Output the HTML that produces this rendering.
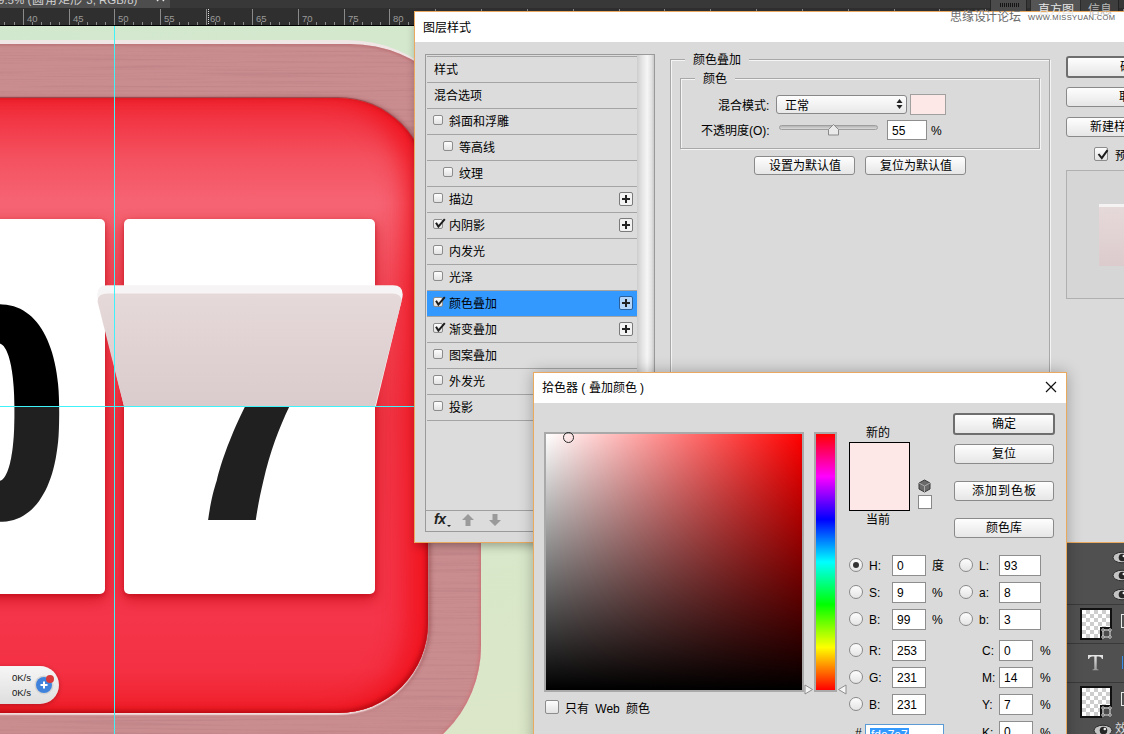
<!DOCTYPE html>
<html lang="zh-CN">
<head>
<meta charset="utf-8">
<style>
*{margin:0;padding:0;box-sizing:border-box;}
html,body{width:1124px;height:734px;overflow:hidden;background:#2e2e2e;font-family:"Liberation Sans",sans-serif;position:relative;}
.a{position:absolute;}
.t12{font-weight:500;font-size:12px;color:#000;white-space:nowrap;line-height:16px;}
/* top */
#topbar{left:0;top:0;width:1124px;height:11px;background:transparent;z-index:1;}
#topbar::before{content:"";position:absolute;left:0;top:0;width:1124px;height:8px;background:#383838;}
#tab{left:0;top:0;width:170px;height:8px;background:#4d4d4d;overflow:hidden;color:#d0d0d0;font-size:12px;white-space:nowrap;}
#ruler{left:0;top:8px;width:1124px;height:18px;background:#2f2f2f;border-bottom:1px solid #000;overflow:hidden;}
.tk{position:absolute;width:1px;background:#8a8a8a;}
.rn{position:absolute;top:5px;font-size:9.5px;line-height:11px;color:#9a9a9a;}
#canvas{left:0;top:26px;width:1124px;height:708px;background:#d3e6c9;overflow:hidden;}
/* dialog 1 */
#dlg{left:414px;top:11px;width:720px;height:532px;background:#dadada;border:1px solid #e9a95e;border-right:none;box-shadow:0 5px 9px -2px rgba(0,0,0,0.3);}
#dlgtitle{left:415px;top:12px;width:709px;height:30px;background:#fff;}
.row{left:427px;width:210px;height:26px;border-top:1px solid #a4a4a4;}
.row.sel{background:#3399ff;}
.rt{position:absolute;top:6px;font-weight:500;font-size:12px;line-height:14px;white-space:nowrap;color:#000;}
.cb{position:absolute;top:6px;width:10px;height:10px;border:1px solid #8c8c8c;border-radius:2px;background:linear-gradient(#fdfdfd,#e2e2e2);}
.ck{position:absolute;left:-1px;top:-1px;overflow:visible;}
.plus{position:absolute;left:192px;top:5px;width:14px;height:14px;border:1px solid #7a7a7a;border-radius:2px;background:#f2f2f2;}
.sel .plus{background:#b4d6fb;border-color:#2a5f9a;}
.plus::before{content:"";position:absolute;left:2px;top:5px;width:8px;height:2px;background:#222;}
.plus::after{content:"";position:absolute;left:5px;top:2px;width:2px;height:8px;background:#222;}
.btn{position:absolute;font-weight:500;border:1px solid #8a8a8a;border-radius:3px;background:linear-gradient(#fefefe,#e6e6e6);font-size:12px;line-height:18px;text-align:center;white-space:nowrap;color:#000;}
.grp{position:absolute;border:1px solid #a8a8a8;box-shadow:1px 1px 0 #f4f4f4, inset 1px 1px 0 #f4f4f4;}
.inp{position:absolute;background:#fff;border:1px solid #8e8e8e;font-size:12px;line-height:20px;padding-left:4px;color:#000;}
.rad{position:absolute;width:14px;height:14px;border:1px solid #8a8a8a;border-radius:50%;background:linear-gradient(#fdfdfd,#e4e4e4);}
.rad.on::after{content:"";position:absolute;left:3px;top:3px;width:6px;height:6px;border-radius:50%;background:#333;}
</style>
</head>
<body>
<div id="canvas" class="a" style="left:0;top:0;width:1124px;height:734px;overflow:hidden;background:linear-gradient(160deg,#d2e8ce 0%,#d6e8cb 50%,#dfe6c6 100%);">
  <!-- frame -->
  <div class="a" style="left:-300px;top:40px;width:781px;height:727px;border-radius:0 135px 121px 0;background:#f1e6e6;"></div>
  <div class="a" style="left:-300px;top:44px;width:781px;height:723px;border-radius:0 131px 121px 0;background:#ca8d8f;box-shadow:inset -2px 0 3px rgba(215,95,100,0.4), inset 0 2px 2px rgba(150,80,85,0.25);overflow:hidden;">
    <svg class="a" style="left:0;top:0" width="781" height="737"><defs><filter id="brush" x="0" y="0" width="100%" height="100%"><feTurbulence type="fractalNoise" baseFrequency="0.006 0.45" numOctaves="3" seed="7" result="n"/><feColorMatrix in="n" type="matrix" values="0 0 0 0 0.45  0 0 0 0 0.2  0 0 0 0 0.22  1.6 0 0 0 -0.75"/></filter></defs><rect width="781" height="737" filter="url(#brush)" opacity="0.8"/></svg>
  </div>
  <!-- red -->
  <div class="a" style="left:-300px;top:98px;width:728px;height:615px;border-radius:0 90px 90px 0;background:linear-gradient(180deg,#f02631 0px,#f23847 25px,#f4515f 60px,#f66474 105px,#f55f6e 125px,#f14454 200px,#ef3545 320px,#f5354a 520px,#f43144 570px,#f01f2a 616px);box-shadow:0 -1px 1px rgba(140,40,45,0.7), 0 1.5px 1.5px rgba(255,238,238,0.85), 3px 0 4px rgba(110,30,35,0.35), inset -2px -2px 4px rgba(130,0,10,0.5), inset -34px 0 26px -12px rgba(240,18,28,0.9), inset 0 5px 6px -4px rgba(200,20,30,0.4), inset 0 -8px 10px -4px rgba(220,15,20,0.6);"></div>
  <!-- cards -->
  <div class="a" style="left:-146px;top:219px;width:251px;height:375px;border-radius:5px;background:#fff;box-shadow:0 2px 4px rgba(175,0,10,0.45), 0 6px 14px rgba(185,0,12,0.55);"></div>
  <div class="a" style="left:124px;top:219px;width:251px;height:375px;border-radius:5px;background:#fff;box-shadow:0 2px 4px rgba(175,0,10,0.45), 0 6px 14px rgba(185,0,12,0.55);"></div>
  <svg class="a" style="left:0;top:0" width="1124" height="734">
    <defs>
      <clipPath id="up"><rect x="0" y="0" width="1124" height="406"/></clipPath>
      <clipPath id="dn"><rect x="0" y="406" width="1124" height="328"/></clipPath>
      <linearGradient id="flapg" x1="0" y1="0" x2="0" y2="1"><stop offset="0" stop-color="#e6d9da"/><stop offset="1" stop-color="#dacbcc"/></linearGradient>
    </defs>
    <path d="M59.2,413.1 L59.1,421.9 L58.9,429.0 L58.6,435.5 L58.1,441.7 L57.4,447.5 L56.6,453.1 L55.7,458.5 L54.6,463.7 L53.4,468.7 L52.1,473.4 L50.6,478.0 L49.0,482.3 L47.3,486.5 L45.4,490.4 L43.4,494.1 L41.3,497.6 L39.1,500.9 L36.8,503.9 L34.3,506.8 L31.7,509.4 L29.0,511.7 L26.2,513.8 L23.3,515.7 L20.2,517.4 L17.0,518.7 L13.7,519.9 L10.2,520.8 L6.5,521.4 L2.5,521.8 L-2.5,521.9 L-7.5,521.8 L-11.5,521.4 L-15.2,520.8 L-18.7,519.9 L-22.0,518.7 L-25.2,517.4 L-28.3,515.7 L-31.2,513.8 L-34.0,511.7 L-36.7,509.4 L-39.3,506.8 L-41.8,503.9 L-44.1,500.9 L-46.3,497.6 L-48.4,494.1 L-50.4,490.4 L-52.3,486.5 L-54.0,482.3 L-55.6,478.0 L-57.1,473.4 L-58.4,468.7 L-59.6,463.7 L-60.7,458.5 L-61.6,453.1 L-62.4,447.5 L-63.1,441.7 L-63.6,435.5 L-63.9,429.0 L-64.1,421.9 L-64.2,413.1 L-64.1,404.3 L-63.9,397.2 L-63.6,390.7 L-63.1,384.5 L-62.4,378.7 L-61.6,373.1 L-60.7,367.7 L-59.6,362.5 L-58.4,357.5 L-57.1,352.8 L-55.6,348.2 L-54.0,343.9 L-52.3,339.7 L-50.4,335.8 L-48.4,332.1 L-46.3,328.6 L-44.1,325.3 L-41.8,322.3 L-39.3,319.4 L-36.7,316.8 L-34.0,314.5 L-31.2,312.4 L-28.3,310.5 L-25.2,308.8 L-22.0,307.5 L-18.7,306.3 L-15.2,305.4 L-11.5,304.8 L-7.5,304.4 L-2.5,304.3 L2.5,304.4 L6.5,304.8 L10.2,305.4 L13.7,306.3 L17.0,307.5 L20.2,308.8 L23.3,310.5 L26.2,312.4 L29.0,314.5 L31.7,316.8 L34.3,319.4 L36.8,322.3 L39.1,325.3 L41.3,328.6 L43.4,332.1 L45.4,335.8 L47.3,339.7 L49.0,343.9 L50.6,348.2 L52.1,352.8 L53.4,357.5 L54.6,362.5 L55.7,367.7 L56.6,373.1 L57.4,378.7 L58.1,384.5 L58.6,390.7 L58.9,397.2 L59.1,404.3 Z M14.4,412.2 L14.4,417.5 L14.3,421.8 L14.2,425.9 L14.1,429.7 L13.9,433.4 L13.7,437.0 L13.4,440.4 L13.1,443.7 L12.8,446.8 L12.4,449.9 L12.0,452.8 L11.5,455.6 L11.1,458.3 L10.5,460.8 L10.0,463.2 L9.4,465.5 L8.8,467.6 L8.1,469.6 L7.4,471.4 L6.7,473.1 L6.0,474.6 L5.2,476.0 L4.4,477.2 L3.6,478.3 L2.7,479.2 L1.8,479.9 L0.8,480.5 L-0.1,480.9 L-1.2,481.2 L-2.5,481.2 L-3.8,481.2 L-4.9,480.9 L-5.8,480.5 L-6.8,479.9 L-7.7,479.2 L-8.6,478.3 L-9.4,477.2 L-10.2,476.0 L-11.0,474.6 L-11.7,473.1 L-12.4,471.4 L-13.1,469.6 L-13.8,467.6 L-14.4,465.5 L-15.0,463.2 L-15.5,460.8 L-16.1,458.3 L-16.5,455.6 L-17.0,452.8 L-17.4,449.9 L-17.8,446.8 L-18.1,443.7 L-18.4,440.4 L-18.7,437.0 L-18.9,433.4 L-19.1,429.7 L-19.2,425.9 L-19.3,421.8 L-19.4,417.5 L-19.4,412.2 L-19.4,406.9 L-19.3,402.6 L-19.2,398.5 L-19.1,394.7 L-18.9,391.0 L-18.7,387.4 L-18.4,384.0 L-18.1,380.7 L-17.8,377.6 L-17.4,374.5 L-17.0,371.6 L-16.5,368.8 L-16.1,366.1 L-15.5,363.6 L-15.0,361.2 L-14.4,358.9 L-13.8,356.8 L-13.1,354.8 L-12.4,353.0 L-11.7,351.3 L-11.0,349.8 L-10.2,348.4 L-9.4,347.2 L-8.6,346.1 L-7.7,345.2 L-6.8,344.5 L-5.8,343.9 L-4.9,343.5 L-3.8,343.2 L-2.5,343.1 L-1.2,343.2 L-0.1,343.5 L0.8,343.9 L1.8,344.5 L2.7,345.2 L3.6,346.1 L4.4,347.2 L5.2,348.4 L6.0,349.8 L6.7,351.3 L7.4,353.0 L8.1,354.8 L8.8,356.8 L9.4,358.9 L10.0,361.2 L10.5,363.6 L11.1,366.1 L11.5,368.8 L12.0,371.6 L12.4,374.5 L12.8,377.6 L13.1,380.7 L13.4,384.0 L13.7,387.4 L13.9,391.0 L14.1,394.7 L14.2,398.5 L14.3,402.6 L14.4,406.9 Z" fill="#000" fill-rule="evenodd" clip-path="url(#up)"/>
    <path d="M59.2,413.1 L59.1,421.9 L58.9,429.0 L58.6,435.5 L58.1,441.7 L57.4,447.5 L56.6,453.1 L55.7,458.5 L54.6,463.7 L53.4,468.7 L52.1,473.4 L50.6,478.0 L49.0,482.3 L47.3,486.5 L45.4,490.4 L43.4,494.1 L41.3,497.6 L39.1,500.9 L36.8,503.9 L34.3,506.8 L31.7,509.4 L29.0,511.7 L26.2,513.8 L23.3,515.7 L20.2,517.4 L17.0,518.7 L13.7,519.9 L10.2,520.8 L6.5,521.4 L2.5,521.8 L-2.5,521.9 L-7.5,521.8 L-11.5,521.4 L-15.2,520.8 L-18.7,519.9 L-22.0,518.7 L-25.2,517.4 L-28.3,515.7 L-31.2,513.8 L-34.0,511.7 L-36.7,509.4 L-39.3,506.8 L-41.8,503.9 L-44.1,500.9 L-46.3,497.6 L-48.4,494.1 L-50.4,490.4 L-52.3,486.5 L-54.0,482.3 L-55.6,478.0 L-57.1,473.4 L-58.4,468.7 L-59.6,463.7 L-60.7,458.5 L-61.6,453.1 L-62.4,447.5 L-63.1,441.7 L-63.6,435.5 L-63.9,429.0 L-64.1,421.9 L-64.2,413.1 L-64.1,404.3 L-63.9,397.2 L-63.6,390.7 L-63.1,384.5 L-62.4,378.7 L-61.6,373.1 L-60.7,367.7 L-59.6,362.5 L-58.4,357.5 L-57.1,352.8 L-55.6,348.2 L-54.0,343.9 L-52.3,339.7 L-50.4,335.8 L-48.4,332.1 L-46.3,328.6 L-44.1,325.3 L-41.8,322.3 L-39.3,319.4 L-36.7,316.8 L-34.0,314.5 L-31.2,312.4 L-28.3,310.5 L-25.2,308.8 L-22.0,307.5 L-18.7,306.3 L-15.2,305.4 L-11.5,304.8 L-7.5,304.4 L-2.5,304.3 L2.5,304.4 L6.5,304.8 L10.2,305.4 L13.7,306.3 L17.0,307.5 L20.2,308.8 L23.3,310.5 L26.2,312.4 L29.0,314.5 L31.7,316.8 L34.3,319.4 L36.8,322.3 L39.1,325.3 L41.3,328.6 L43.4,332.1 L45.4,335.8 L47.3,339.7 L49.0,343.9 L50.6,348.2 L52.1,352.8 L53.4,357.5 L54.6,362.5 L55.7,367.7 L56.6,373.1 L57.4,378.7 L58.1,384.5 L58.6,390.7 L58.9,397.2 L59.1,404.3 Z M14.4,412.2 L14.4,417.5 L14.3,421.8 L14.2,425.9 L14.1,429.7 L13.9,433.4 L13.7,437.0 L13.4,440.4 L13.1,443.7 L12.8,446.8 L12.4,449.9 L12.0,452.8 L11.5,455.6 L11.1,458.3 L10.5,460.8 L10.0,463.2 L9.4,465.5 L8.8,467.6 L8.1,469.6 L7.4,471.4 L6.7,473.1 L6.0,474.6 L5.2,476.0 L4.4,477.2 L3.6,478.3 L2.7,479.2 L1.8,479.9 L0.8,480.5 L-0.1,480.9 L-1.2,481.2 L-2.5,481.2 L-3.8,481.2 L-4.9,480.9 L-5.8,480.5 L-6.8,479.9 L-7.7,479.2 L-8.6,478.3 L-9.4,477.2 L-10.2,476.0 L-11.0,474.6 L-11.7,473.1 L-12.4,471.4 L-13.1,469.6 L-13.8,467.6 L-14.4,465.5 L-15.0,463.2 L-15.5,460.8 L-16.1,458.3 L-16.5,455.6 L-17.0,452.8 L-17.4,449.9 L-17.8,446.8 L-18.1,443.7 L-18.4,440.4 L-18.7,437.0 L-18.9,433.4 L-19.1,429.7 L-19.2,425.9 L-19.3,421.8 L-19.4,417.5 L-19.4,412.2 L-19.4,406.9 L-19.3,402.6 L-19.2,398.5 L-19.1,394.7 L-18.9,391.0 L-18.7,387.4 L-18.4,384.0 L-18.1,380.7 L-17.8,377.6 L-17.4,374.5 L-17.0,371.6 L-16.5,368.8 L-16.1,366.1 L-15.5,363.6 L-15.0,361.2 L-14.4,358.9 L-13.8,356.8 L-13.1,354.8 L-12.4,353.0 L-11.7,351.3 L-11.0,349.8 L-10.2,348.4 L-9.4,347.2 L-8.6,346.1 L-7.7,345.2 L-6.8,344.5 L-5.8,343.9 L-4.9,343.5 L-3.8,343.2 L-2.5,343.1 L-1.2,343.2 L-0.1,343.5 L0.8,343.9 L1.8,344.5 L2.7,345.2 L3.6,346.1 L4.4,347.2 L5.2,348.4 L6.0,349.8 L6.7,351.3 L7.4,353.0 L8.1,354.8 L8.8,356.8 L9.4,358.9 L10.0,361.2 L10.5,363.6 L11.1,366.1 L11.5,368.8 L12.0,371.6 L12.4,374.5 L12.8,377.6 L13.1,380.7 L13.4,384.0 L13.7,387.4 L13.9,391.0 L14.1,394.7 L14.2,398.5 L14.3,402.6 L14.4,406.9 Z" fill="#202020" fill-rule="evenodd" clip-path="url(#dn)"/>
    <path d="M245.3,406 L289.6,406 C279,428 270,452 263.4,480.8 C260,495 257.5,508 255.8,520 L208.1,520 C210.5,503 213,492 216.7,480.8 C221,462 232,432 245.3,406 Z" fill="#202020"/>
    <path d="M107,285.3 L393,285.3 Q404,285.3 402.5,297 L376,406 L124,406 L97.5,297 Q96,285.3 107,285.3 Z" fill="#f6f4f4"/>
    <path d="M108,293.5 L392,293.5 Q402.5,293.5 401.2,302.5 L375,406.5 L124,406.5 L97.8,302.5 Q96.5,293.5 108,293.5 Z" fill="url(#flapg)"/>
    <rect x="114" y="26" width="1" height="708" fill="#3ff3fa"/>
    <rect x="0" y="406" width="414" height="1" fill="#3ff3fa"/>
  </svg>
  <!-- net widget -->
  <div class="a" style="left:-20px;top:666px;width:79px;height:38px;border-radius:19px;background:linear-gradient(#f6f6f6,#dedede);box-shadow:0 1px 4px rgba(80,0,0,0.35);"></div>
  <span class="a" style="left:12px;top:672px;font-size:9.5px;line-height:11px;color:#111;">0K/s</span>
  <span class="a" style="left:12px;top:687px;font-size:9.5px;line-height:11px;color:#111;">0K/s</span>
  <div class="a" style="left:36px;top:677px;width:16px;height:16px;border-radius:50%;background:#3f82dc;box-shadow:0 0 0 1.5px #d4d4d4;"></div>
  <svg class="a" style="left:38px;top:679px" width="12" height="12"><path d="M6 2.5 V9.5 M2.5 6 H9.5" stroke="#fff" stroke-width="2"/></svg>
  <div class="a" style="left:46px;top:675px;width:8px;height:8px;border-radius:50%;background:#d93a3a;"></div>
</div>
<div id="topbar" class="a">
  <div id="tab" class="a"><span class="a" style="left:-2px;top:-6px;font-size:11.5px;line-height:13px;">9.5% (<span style="font-size:12px;letter-spacing:0.7px;margin-left:1px">圆角矩形</span> 3, RGB/8)</span><svg class="a" style="left:156px;top:-7px" width="9" height="9"><path d="M1 1 L8 8 M8 1 L1 8" stroke="#e0e0e0" stroke-width="1.4"/></svg></div>
  <div class="a" style="left:990px;top:0;width:37px;height:11px;background:#4b4b4b;border-left:1px solid #262626;border-right:1px solid #262626;"><div class="a" style="left:9px;top:3px;width:19px;height:4px;background:repeating-linear-gradient(90deg,#151515 0px,#151515 1px,transparent 1px,transparent 2px);"></div></div>
  <div class="a" style="left:1030px;top:0;width:50px;height:11px;background:#555;border-left:1px solid #2a2a2a;"><span class="a" style="left:7px;top:2.5px;font-size:12px;line-height:14px;color:#e6e6e6;white-space:nowrap">直方图</span></div>
  <div class="a" style="left:1080px;top:0;width:39px;height:11px;background:#3e3e3e;border-left:1px solid #2a2a2a;border-right:1px solid #222;"><span class="a" style="left:7px;top:2.5px;font-size:12px;line-height:14px;color:#b8b8b8;white-space:nowrap">信息</span></div>
</div>
<div id="ruler" class="a"><div class="tk" style="left:4px;top:14px;height:3px;"></div><div class="tk" style="left:14px;top:14px;height:3px;"></div><div class="tk" style="left:23px;top:1px;height:17px;"></div><span class="rn" style="left:27px">40</span><div class="tk" style="left:32px;top:14px;height:3px;"></div><div class="tk" style="left:41px;top:14px;height:3px;"></div><div class="tk" style="left:50px;top:14px;height:3px;"></div><div class="tk" style="left:59px;top:14px;height:3px;"></div><div class="tk" style="left:69px;top:1px;height:17px;"></div><span class="rn" style="left:73px">45</span><div class="tk" style="left:78px;top:14px;height:3px;"></div><div class="tk" style="left:87px;top:14px;height:3px;"></div><div class="tk" style="left:96px;top:14px;height:3px;"></div><div class="tk" style="left:105px;top:14px;height:3px;"></div><div class="tk" style="left:114px;top:1px;height:17px;"></div><span class="rn" style="left:118px">50</span><div class="tk" style="left:124px;top:14px;height:3px;"></div><div class="tk" style="left:133px;top:14px;height:3px;"></div><div class="tk" style="left:142px;top:14px;height:3px;"></div><div class="tk" style="left:151px;top:14px;height:3px;"></div><div class="tk" style="left:160px;top:1px;height:17px;"></div><span class="rn" style="left:164px">55</span><div class="tk" style="left:169px;top:14px;height:3px;"></div><div class="tk" style="left:179px;top:14px;height:3px;"></div><div class="tk" style="left:188px;top:14px;height:3px;"></div><div class="tk" style="left:197px;top:14px;height:3px;"></div><div class="tk" style="left:206px;top:1px;height:17px;"></div><span class="rn" style="left:210px">60</span><div class="tk" style="left:215px;top:14px;height:3px;"></div><div class="tk" style="left:224px;top:14px;height:3px;"></div><div class="tk" style="left:234px;top:14px;height:3px;"></div><div class="tk" style="left:243px;top:14px;height:3px;"></div><div class="tk" style="left:252px;top:1px;height:17px;"></div><span class="rn" style="left:256px">65</span><div class="tk" style="left:261px;top:14px;height:3px;"></div><div class="tk" style="left:270px;top:14px;height:3px;"></div><div class="tk" style="left:279px;top:14px;height:3px;"></div><div class="tk" style="left:289px;top:14px;height:3px;"></div><div class="tk" style="left:298px;top:1px;height:17px;"></div><span class="rn" style="left:302px">70</span><div class="tk" style="left:307px;top:14px;height:3px;"></div><div class="tk" style="left:316px;top:14px;height:3px;"></div><div class="tk" style="left:325px;top:14px;height:3px;"></div><div class="tk" style="left:334px;top:14px;height:3px;"></div><div class="tk" style="left:344px;top:1px;height:17px;"></div><span class="rn" style="left:348px">75</span><div class="tk" style="left:353px;top:14px;height:3px;"></div><div class="tk" style="left:362px;top:14px;height:3px;"></div><div class="tk" style="left:371px;top:14px;height:3px;"></div><div class="tk" style="left:380px;top:14px;height:3px;"></div><div class="tk" style="left:389px;top:1px;height:17px;"></div><span class="rn" style="left:393px">80</span><div class="tk" style="left:399px;top:14px;height:3px;"></div><div class="tk" style="left:408px;top:14px;height:3px;"></div><div class="tk" style="left:417px;top:14px;height:3px;"></div><div class="tk" style="left:426px;top:14px;height:3px;"></div><div class="tk" style="left:435px;top:1px;height:17px;"></div><span class="rn" style="left:439px">85</span><div class="tk" style="left:444px;top:14px;height:3px;"></div><div class="tk" style="left:454px;top:14px;height:3px;"></div><div class="tk" style="left:463px;top:14px;height:3px;"></div><div class="tk" style="left:472px;top:14px;height:3px;"></div><div class="tk" style="left:481px;top:1px;height:17px;"></div><span class="rn" style="left:485px">90</span><div class="tk" style="left:490px;top:14px;height:3px;"></div><div class="tk" style="left:499px;top:14px;height:3px;"></div><div class="tk" style="left:509px;top:14px;height:3px;"></div><div class="tk" style="left:518px;top:14px;height:3px;"></div><div class="tk" style="left:527px;top:1px;height:17px;"></div><span class="rn" style="left:531px">95</span><div class="tk" style="left:536px;top:14px;height:3px;"></div><div class="tk" style="left:545px;top:14px;height:3px;"></div><div class="tk" style="left:554px;top:14px;height:3px;"></div><div class="tk" style="left:564px;top:14px;height:3px;"></div><div class="tk" style="left:573px;top:1px;height:17px;"></div><span class="rn" style="left:577px">100</span><div class="tk" style="left:582px;top:14px;height:3px;"></div><div class="tk" style="left:591px;top:14px;height:3px;"></div><div class="tk" style="left:600px;top:14px;height:3px;"></div><div class="tk" style="left:609px;top:14px;height:3px;"></div><div class="tk" style="left:619px;top:1px;height:17px;"></div><span class="rn" style="left:623px">105</span><div class="tk" style="left:628px;top:14px;height:3px;"></div><div class="tk" style="left:637px;top:14px;height:3px;"></div><div class="tk" style="left:646px;top:14px;height:3px;"></div><div class="tk" style="left:655px;top:14px;height:3px;"></div><div class="tk" style="left:664px;top:1px;height:17px;"></div><span class="rn" style="left:668px">110</span><div class="tk" style="left:674px;top:14px;height:3px;"></div><div class="tk" style="left:683px;top:14px;height:3px;"></div><div class="tk" style="left:692px;top:14px;height:3px;"></div><div class="tk" style="left:701px;top:14px;height:3px;"></div><div class="tk" style="left:710px;top:1px;height:17px;"></div><span class="rn" style="left:714px">115</span><div class="tk" style="left:719px;top:14px;height:3px;"></div><div class="tk" style="left:729px;top:14px;height:3px;"></div><div class="tk" style="left:738px;top:14px;height:3px;"></div><div class="tk" style="left:747px;top:14px;height:3px;"></div><div class="tk" style="left:756px;top:1px;height:17px;"></div><span class="rn" style="left:760px">120</span><div class="tk" style="left:765px;top:14px;height:3px;"></div><div class="tk" style="left:774px;top:14px;height:3px;"></div><div class="tk" style="left:784px;top:14px;height:3px;"></div><div class="tk" style="left:793px;top:14px;height:3px;"></div><div class="tk" style="left:802px;top:1px;height:17px;"></div><span class="rn" style="left:806px">125</span><div class="tk" style="left:811px;top:14px;height:3px;"></div><div class="tk" style="left:820px;top:14px;height:3px;"></div><div class="tk" style="left:829px;top:14px;height:3px;"></div><div class="tk" style="left:839px;top:14px;height:3px;"></div><div class="tk" style="left:848px;top:1px;height:17px;"></div><span class="rn" style="left:852px">130</span><div class="tk" style="left:857px;top:14px;height:3px;"></div><div class="tk" style="left:866px;top:14px;height:3px;"></div><div class="tk" style="left:875px;top:14px;height:3px;"></div><div class="tk" style="left:884px;top:14px;height:3px;"></div><div class="tk" style="left:894px;top:1px;height:17px;"></div><span class="rn" style="left:898px">135</span><div class="tk" style="left:903px;top:14px;height:3px;"></div><div class="tk" style="left:912px;top:14px;height:3px;"></div><div class="tk" style="left:921px;top:14px;height:3px;"></div><div class="tk" style="left:930px;top:14px;height:3px;"></div><div class="tk" style="left:939px;top:1px;height:17px;"></div><span class="rn" style="left:943px">140</span><div class="tk" style="left:949px;top:14px;height:3px;"></div><div class="tk" style="left:958px;top:14px;height:3px;"></div><div class="tk" style="left:967px;top:14px;height:3px;"></div><div class="tk" style="left:976px;top:14px;height:3px;"></div><div class="tk" style="left:985px;top:1px;height:17px;"></div><span class="rn" style="left:989px">145</span><div class="tk" style="left:994px;top:14px;height:3px;"></div><div class="tk" style="left:1004px;top:14px;height:3px;"></div><div class="tk" style="left:1013px;top:14px;height:3px;"></div><div class="tk" style="left:1022px;top:14px;height:3px;"></div><div class="tk" style="left:1031px;top:1px;height:17px;"></div><span class="rn" style="left:1035px">150</span><div class="tk" style="left:1040px;top:14px;height:3px;"></div><div class="tk" style="left:1049px;top:14px;height:3px;"></div><div class="tk" style="left:1059px;top:14px;height:3px;"></div><div class="tk" style="left:1068px;top:14px;height:3px;"></div><div class="tk" style="left:1077px;top:1px;height:17px;"></div><span class="rn" style="left:1081px">155</span><div class="tk" style="left:1086px;top:14px;height:3px;"></div><div class="tk" style="left:1095px;top:14px;height:3px;"></div><div class="tk" style="left:1104px;top:14px;height:3px;"></div><div class="tk" style="left:1114px;top:14px;height:3px;"></div><div class="tk" style="left:1123px;top:1px;height:17px;"></div><span class="rn" style="left:1127px">160</span><div class="a" style="left:208px;top:1px;width:1px;height:17px;border-left:1px dotted #ddd;"></div></div>
<div id="dlg" class="a"></div>
<div id="dlgtitle" class="a"><span class="a t12" style="left:8px;top:8px;">图层样式</span></div>
<span class="a" style="left:950px;top:8.5px;font-size:12px;line-height:16px;color:#6a6a6a;white-space:nowrap;letter-spacing:-0.2px;text-shadow:0 0 1px rgba(255,255,255,0.9);">思缘设计论坛</span>
<span class="a" style="left:1028px;top:12.5px;font:7.5px/10px 'Liberation Sans',sans-serif;color:#5a5a5a;white-space:nowrap;letter-spacing:0.35px;">WWW.MISSYUAN.COM</span>
<!-- list box -->
<div class="a" style="left:425px;top:54px;width:230px;height:478px;border:1px solid #9a9a9a;background:#dcdcdc;"></div>
<div class="a" style="left:637px;top:55px;width:17px;height:456px;background:linear-gradient(90deg,#cdcdcd 0%,#e4e4e4 30%,#f6f6f6 60%,#e2e2e2 85%,#c9c9c9 100%);"></div>
<div class="a row" style="top:56px"><span class="rt" style="left:7px">样式</span></div>
<div class="a row" style="top:82px"><span class="rt" style="left:7px">混合选项</span></div>
<div class="a row" style="top:108px"><span class="cb" style="left:6px"></span><span class="rt" style="left:22px">斜面和浮雕</span></div>
<div class="a row" style="top:134px"><span class="cb" style="left:16px"></span><span class="rt" style="left:32px">等高线</span></div>
<div class="a row" style="top:160px"><span class="cb" style="left:16px"></span><span class="rt" style="left:32px">纹理</span></div>
<div class="a row" style="top:186px"><span class="cb" style="left:6px"></span><span class="rt" style="left:22px">描边</span><span class="plus"></span></div>
<div class="a row" style="top:212px"><span class="cb on" style="left:6px"><svg class="ck" width="14" height="12"><path d="M3 3.8 L5.4 7.6 L11.8 0.2" fill="none" stroke="#1c1c1c" stroke-width="2"/></svg></span><span class="rt" style="left:22px">内阴影</span><span class="plus"></span></div>
<div class="a row" style="top:238px"><span class="cb" style="left:6px"></span><span class="rt" style="left:22px">内发光</span></div>
<div class="a row" style="top:264px"><span class="cb" style="left:6px"></span><span class="rt" style="left:22px">光泽</span></div>
<div class="a row sel" style="top:290px"><span class="cb on" style="left:6px"><svg class="ck" width="14" height="12"><path d="M3 3.8 L5.4 7.6 L11.8 0.2" fill="none" stroke="#1c1c1c" stroke-width="2"/></svg></span><span class="rt" style="left:22px">颜色叠加</span><span class="plus"></span></div>
<div class="a row" style="top:316px"><span class="cb on" style="left:6px"><svg class="ck" width="14" height="12"><path d="M3 3.8 L5.4 7.6 L11.8 0.2" fill="none" stroke="#1c1c1c" stroke-width="2"/></svg></span><span class="rt" style="left:22px">渐变叠加</span><span class="plus"></span></div>
<div class="a row" style="top:342px"><span class="cb" style="left:6px"></span><span class="rt" style="left:22px">图案叠加</span></div>
<div class="a row" style="top:368px"><span class="cb" style="left:6px"></span><span class="rt" style="left:22px">外发光</span></div>
<div class="a row" style="top:394px"><span class="cb" style="left:6px"></span><span class="rt" style="left:22px">投影</span></div>
<div class="a" style="left:427px;top:420px;width:210px;height:1px;background:#a4a4a4;"></div>
<div class="a" style="left:426px;top:510px;width:228px;height:1px;background:#a0a0a0;"></div>
<span class="a" style="left:434px;top:511px;font:italic bold 14px/16px 'Liberation Sans',sans-serif;color:#222;letter-spacing:-0.5px;">fx</span>
<div class="a" style="left:447px;top:525px;width:0;height:0;border-left:2px solid transparent;border-right:2px solid transparent;border-top:2px solid #222;"></div>
<svg class="a" style="left:461px;top:514px" width="14" height="13"><path d="M7 0 L13 6 L9.5 6 L9.5 12 L4.5 12 L4.5 6 L1 6 Z" fill="#9a9a9a"/></svg>
<svg class="a" style="left:488px;top:514px" width="14" height="13"><path d="M7 12 L13 6 L9.5 6 L9.5 0 L4.5 0 L4.5 6 L1 6 Z" fill="#9a9a9a"/></svg>
<!-- color overlay group -->
<div class="grp" style="left:670px;top:59px;width:380px;height:330px;"></div>
<span class="a t12" style="left:685px;top:52px;background:#dadada;padding:0 8px;">颜色叠加</span>
<div class="grp" style="left:680px;top:78px;width:360px;height:71px;"></div>
<span class="a t12" style="left:695px;top:71px;background:#dadada;padding:0 8px;">颜色</span>
<span class="a t12" style="left:718px;top:98px;">混合模式:</span>
<div class="a" style="left:776px;top:95px;width:131px;height:19px;border:1px solid #888;border-radius:3px;background:linear-gradient(#fdfdfd,#e8e8e8);"></div>
<span class="a t12" style="left:785px;top:98px;">正常</span>
<svg class="a" style="left:896px;top:98px" width="7" height="12"><path d="M0.5 5 L3.5 1 L6.5 5 Z M0.5 7 L3.5 11 L6.5 7 Z" fill="#222"/></svg>
<div class="a" style="left:910px;top:94px;width:36px;height:21px;border:1px solid #a0a0a0;background:#fde7e7;"></div>
<span class="a t12" style="left:701px;top:123px;">不透明度(O):</span>
<div class="a" style="left:779px;top:125px;width:99px;height:5px;border-radius:3px;background:linear-gradient(#b4b4b4,#dadada);border:1px solid #9e9e9e;"></div>
<svg class="a" style="left:827px;top:124px" width="13" height="12"><path d="M6.5 0.5 L11.5 5.5 L11.5 11 L1.5 11 L1.5 5.5 Z" fill="#eaeaea" stroke="#8a8a8a"/></svg>
<div class="inp" style="left:887px;top:120px;width:40px;height:20px;">55</div>
<span class="a t12" style="left:931px;top:123px;">%</span>
<div class="btn" style="left:754px;top:156px;width:101px;height:19px;">设置为默认值</div>
<div class="btn" style="left:865px;top:156px;width:101px;height:19px;">复位为默认值</div>
<!-- right buttons -->
<div class="btn" style="left:1066px;top:56px;width:80px;height:22px;border:2px solid #6e6e6e;line-height:18px;text-align:left;padding-left:52px;">确定</div>
<div class="btn" style="left:1066px;top:87px;width:80px;height:20px;text-align:left;padding-left:52px;">取消</div>
<div class="btn" style="left:1066px;top:117px;width:80px;height:20px;text-align:left;padding-left:23px;">新建样式(W)...</div>
<div class="cb" style="left:1094px;top:147px;width:14px;height:14px;"><svg class="ck" style="left:1px;top:0px" width="14" height="14"><path d="M2.5 6 L5.8 10.2 L11.5 2.2" fill="none" stroke="#1c1c1c" stroke-width="2"/></svg></div>
<span class="a t12" style="left:1115px;top:148px;">预览(V)</span>
<div class="a" style="left:1066px;top:170px;width:70px;height:129px;border:1px solid #b0b0b0;background:#d6d6d6;"></div>
<div class="a" style="left:1099px;top:204px;width:40px;height:62px;background:linear-gradient(#e6d9da,#dccbcc);border-top:3px solid #f4f2f2;"></div>
<!-- layers panel bottom right -->
<div class="a" style="left:1066px;top:543px;width:58px;height:191px;background:#505050;"></div>
<div class="a" style="left:1066px;top:604px;width:58px;height:1px;background:#393939;"></div>
<div class="a" style="left:1066px;top:643px;width:58px;height:1px;background:#393939;"></div>
<div class="a" style="left:1066px;top:682px;width:58px;height:1px;background:#393939;"></div>
<svg class="a" style="left:1112px;top:551px" width="20" height="13"><ellipse cx="10" cy="6.5" rx="9" ry="5.3" fill="#c4c4c4" stroke="#2c2c2c" stroke-width="1"/><circle cx="10.5" cy="6.5" r="3.8" fill="#262626"/><circle cx="11.8" cy="5" r="1.3" fill="#f2f2f2"/></svg>
<svg class="a" style="left:1112px;top:569px" width="20" height="13"><ellipse cx="10" cy="6.5" rx="9" ry="5.3" fill="#c4c4c4" stroke="#2c2c2c" stroke-width="1"/><circle cx="10.5" cy="6.5" r="3.8" fill="#262626"/><circle cx="11.8" cy="5" r="1.3" fill="#f2f2f2"/></svg>
<svg class="a" style="left:1112px;top:588px" width="20" height="13"><ellipse cx="10" cy="6.5" rx="9" ry="5.3" fill="#c4c4c4" stroke="#2c2c2c" stroke-width="1"/><circle cx="10.5" cy="6.5" r="3.8" fill="#262626"/><circle cx="11.8" cy="5" r="1.3" fill="#f2f2f2"/></svg>
<div class="a" style="left:1080px;top:608px;width:32px;height:32px;background:#111;"></div>
<div class="a" style="left:1082px;top:610px;width:28px;height:28px;background-color:#fff;background-image:linear-gradient(45deg,#cdcdcd 25%,transparent 25%,transparent 75%,#cdcdcd 75%),linear-gradient(45deg,#cdcdcd 25%,transparent 25%,transparent 75%,#cdcdcd 75%);background-size:8px 8px;background-position:0 0,4px 4px;"></div>
<div class="a" style="left:1100px;top:627px;width:12px;height:13px;background:#4d4d4d;border-top:2px solid #111;border-left:2px solid #111;"></div>
<svg class="a" style="left:1100px;top:627px" width="13" height="13"><rect x="3" y="3" width="7" height="7" fill="none" stroke="#ddd" stroke-width="1"/><circle cx="3" cy="3" r="1.3" fill="#4d4d4d" stroke="#ddd" stroke-width="0.8"/><circle cx="10" cy="3" r="1.3" fill="#4d4d4d" stroke="#ddd" stroke-width="0.8"/><circle cx="3" cy="10" r="1.3" fill="#4d4d4d" stroke="#ddd" stroke-width="0.8"/><circle cx="10" cy="10" r="1.3" fill="#4d4d4d" stroke="#ddd" stroke-width="0.8"/></svg>
<div class="a" style="left:1121px;top:614px;width:6px;height:14px;border:1.5px solid #e8e8e8;"></div>
<div class="a" style="left:1080px;top:686px;width:32px;height:32px;background:#111;"></div>
<div class="a" style="left:1082px;top:688px;width:28px;height:28px;background-color:#fff;background-image:linear-gradient(45deg,#cdcdcd 25%,transparent 25%,transparent 75%,#cdcdcd 75%),linear-gradient(45deg,#cdcdcd 25%,transparent 25%,transparent 75%,#cdcdcd 75%);background-size:8px 8px;background-position:0 0,4px 4px;"></div>
<div class="a" style="left:1100px;top:705px;width:12px;height:13px;background:#4d4d4d;border-top:2px solid #111;border-left:2px solid #111;"></div>
<svg class="a" style="left:1100px;top:705px" width="13" height="13"><rect x="3" y="3" width="7" height="7" fill="none" stroke="#ddd" stroke-width="1"/><circle cx="3" cy="3" r="1.3" fill="#4d4d4d" stroke="#ddd" stroke-width="0.8"/><circle cx="10" cy="3" r="1.3" fill="#4d4d4d" stroke="#ddd" stroke-width="0.8"/><circle cx="3" cy="10" r="1.3" fill="#4d4d4d" stroke="#ddd" stroke-width="0.8"/><circle cx="10" cy="10" r="1.3" fill="#4d4d4d" stroke="#ddd" stroke-width="0.8"/></svg>
<div class="a" style="left:1121px;top:692px;width:6px;height:14px;border:1.5px solid #e8e8e8;"></div>
<svg class="a" style="left:1087px;top:654px" width="17" height="17"><defs><linearGradient id="tg" x1="0" y1="0" x2="0" y2="1"><stop offset="0" stop-color="#e8e8e8"/><stop offset="1" stop-color="#9a9a9a"/></linearGradient></defs><path d="M1 1 H16 V5 H15 Q14.5 2.5 12 2.5 H9.7 V14.5 Q9.7 15.5 11.5 15.5 V16.3 H5.5 V15.5 Q7.3 15.5 7.3 14.5 V2.5 H5 Q2.5 2.5 2 5 H1 Z" fill="url(#tg)"/></svg>
<div class="a" style="left:1122px;top:656px;width:1px;height:13px;background:#3a8ae8;"></div>
<svg class="a" style="left:1093px;top:724px" width="20" height="13"><ellipse cx="10" cy="6.5" rx="9" ry="5.3" fill="#c4c4c4" stroke="#2c2c2c" stroke-width="1"/><circle cx="10.5" cy="6.5" r="3.8" fill="#262626"/><circle cx="11.8" cy="5" r="1.3" fill="#f2f2f2"/></svg>
<span class="a" style="left:1115px;top:722px;font-size:12px;line-height:14px;color:#ddd;white-space:nowrap;">效果</span>
<!-- color picker -->
<div id="cp" class="a" style="left:533px;top:372px;width:534px;height:380px;background:#dadada;border:1px solid #e9a95e;box-shadow:0 0 14px rgba(0,0,0,0.28);"></div>
<div class="a" style="left:534px;top:373px;width:532px;height:30px;background:#fff;"></div>
<span class="a t12" style="left:542px;top:380px;">拾色器 ( 叠加颜色 )</span>
<svg class="a" style="left:1045px;top:381px" width="12" height="12"><path d="M1 1 L11 11 M11 1 L1 11" stroke="#111" stroke-width="1.2"/></svg>
<div class="a" style="left:544px;top:432px;width:260px;height:260px;border:2px solid #a9a9a9;background:linear-gradient(to top,#000,rgba(0,0,0,0)),linear-gradient(to right,#fff,#f00);"></div>
<div class="a" style="left:563px;top:432px;width:11px;height:11px;border:1.5px solid #2a2a2a;border-radius:50%;"></div>
<div class="a" style="left:814px;top:432px;width:23px;height:260px;border:2px solid #a9a9a9;background:linear-gradient(#f00 0%,#f0f 16.67%,#00f 33.33%,#0ff 50%,#0f0 66.67%,#ff0 83.33%,#f00 100%);"></div>
<svg class="a" style="left:804px;top:684px" width="10" height="11"><path d="M1 1 L8.5 5.5 L1 10 Z" fill="#f4f4f4" stroke="#8e8e8e"/></svg>
<svg class="a" style="left:837px;top:684px" width="10" height="11"><path d="M9 1 L1.5 5.5 L9 10 Z" fill="#f4f4f4" stroke="#8e8e8e"/></svg>
<div class="cb" style="left:545px;top:700px;width:14px;height:14px;"></div>
<span class="a t12" style="left:565px;top:701px;word-spacing:3px;">只有 Web 颜色</span>
<span class="a t12" style="left:866px;top:425px;">新的</span>
<div class="a" style="left:849px;top:442px;width:61px;height:69px;border:1px solid #000;background:#fde7e7;"></div>
<span class="a t12" style="left:866px;top:512px;">当前</span>
<svg class="a" style="left:918px;top:479px" width="13" height="14"><path d="M6.5 1 L12 4 L12 10 L6.5 13 L1 10 L1 4 Z" fill="#6a6a6a" stroke="#3a3a3a"/><path d="M1 4 L6.5 7 L12 4 M6.5 7 L6.5 13" stroke="#aaa" fill="none"/></svg>
<div class="a" style="left:918px;top:495px;width:14px;height:14px;border:1px solid #888;background:#fff;"></div>
<div class="btn" style="left:953px;top:413px;width:102px;height:22px;border:2px solid #6e6e6e;line-height:18px;">确定</div>
<div class="btn" style="left:954px;top:444px;width:100px;height:20px;">复位</div>
<div class="btn" style="left:954px;top:481px;width:100px;height:20px;letter-spacing:1px;">添加到色板</div>
<div class="btn" style="left:954px;top:518px;width:100px;height:20px;">颜色库</div>
<div class="rad on" style="left:849px;top:558px"></div>
<span class="a t12" style="left:869px;top:558px">H:</span>
<div class="inp" style="left:892px;top:555px;width:34px;height:21px">0</div>
<span class="a t12" style="left:932px;top:558px">度</span>
<div class="rad" style="left:959px;top:558px"></div>
<span class="a t12" style="left:979px;top:558px">L:</span>
<div class="inp" style="left:999px;top:555px;width:42px;height:21px">93</div>
<div class="rad" style="left:849px;top:585px"></div>
<span class="a t12" style="left:869px;top:585px">S:</span>
<div class="inp" style="left:892px;top:582px;width:34px;height:21px">9</div>
<span class="a t12" style="left:932px;top:585px">%</span>
<div class="rad" style="left:959px;top:585px"></div>
<span class="a t12" style="left:979px;top:585px">a:</span>
<div class="inp" style="left:999px;top:582px;width:42px;height:21px">8</div>
<div class="rad" style="left:849px;top:612px"></div>
<span class="a t12" style="left:869px;top:612px">B:</span>
<div class="inp" style="left:892px;top:609px;width:34px;height:21px">99</div>
<span class="a t12" style="left:932px;top:612px">%</span>
<div class="rad" style="left:959px;top:612px"></div>
<span class="a t12" style="left:979px;top:612px">b:</span>
<div class="inp" style="left:999px;top:609px;width:42px;height:21px">3</div>
<div class="rad" style="left:849px;top:643px"></div>
<span class="a t12" style="left:869px;top:643px">R:</span>
<div class="inp" style="left:892px;top:640px;width:34px;height:21px">253</div>
<span class="a t12" style="left:982px;top:643px">C:</span>
<div class="inp" style="left:999px;top:640px;width:34px;height:21px">0</div>
<span class="a t12" style="left:1040px;top:643px">%</span>
<div class="rad" style="left:849px;top:670px"></div>
<span class="a t12" style="left:869px;top:670px">G:</span>
<div class="inp" style="left:892px;top:667px;width:34px;height:21px">231</div>
<span class="a t12" style="left:982px;top:670px">M:</span>
<div class="inp" style="left:999px;top:667px;width:34px;height:21px">14</div>
<span class="a t12" style="left:1040px;top:670px">%</span>
<div class="rad" style="left:849px;top:697px"></div>
<span class="a t12" style="left:869px;top:697px">B:</span>
<div class="inp" style="left:892px;top:694px;width:34px;height:21px">231</div>
<span class="a t12" style="left:982px;top:697px">Y:</span>
<div class="inp" style="left:999px;top:694px;width:34px;height:21px">7</div>
<span class="a t12" style="left:1040px;top:697px">%</span>
<span class="a t12" style="left:855px;top:725px">#</span>
<div class="inp" style="left:865px;top:724px;width:79px;height:21px;border-color:#5b9bd5"><span style="background:#3399ff;color:#fff;padding:0 1px">fde7e7</span></div>
<span class="a t12" style="left:982px;top:725px">K:</span>
<div class="inp" style="left:999px;top:721px;width:34px;height:21px">0</div>
<span class="a t12" style="left:1040px;top:725px">%</span>
</body>
</html>
